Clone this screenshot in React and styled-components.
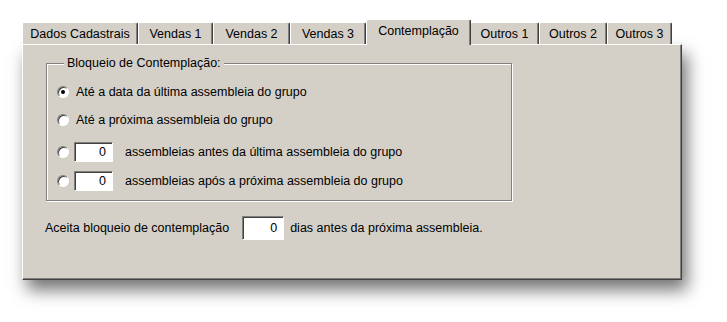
import React from "react";
import styled, { createGlobalStyle } from "styled-components";

const Global = createGlobalStyle`
  html, body { margin: 0; padding: 0; background: #ffffff; }
  body { font-family: "Liberation Sans", Arial, sans-serif; font-size: 12px; color: #000; }
`;

const Page = styled.div`
  width: 727px;
  height: 322px;
  padding: 18px 0 0 22px;
  box-sizing: border-box;
`;

const Dialog = styled.div`
  width: 660px;
  display: flex;
  flex-direction: column;
`;

const TabStrip = styled.div`
  display: flex;
  align-items: flex-end;
  height: 26px;
  position: relative;
  z-index: 1;
`;

const Tab = styled.div`
  box-sizing: border-box;
  width: ${(p) => p.$w}px;
  height: ${(p) => (p.$active ? 26 : 22)}px;
  margin: ${(p) => (p.$active ? "0 -1px -1px 0" : "0")};
  padding-bottom: ${(p) => (p.$active ? 4 : 0)}px;
  display: flex;
  align-items: center;
  justify-content: center;
  background: #d4d0c8;
  border-top: 1px solid #ffffff;
  border-left: 1px solid #ffffff;
  border-right: 1px solid #404040;
  box-shadow: inset -1px 0 0 #808080;
  border-radius: 2px 2px 0 0;
  white-space: nowrap;
  font-size: 12.5px;
  position: relative;
  z-index: ${(p) => (p.$active ? 2 : 0)};
`;

const Panel = styled.div`
  box-sizing: border-box;
  height: 236px;
  background: #d4d0c8;
  border-top: 1px solid #ffffff;
  border-left: 1px solid #ffffff;
  border-right: 1px solid #404040;
  border-bottom: 1px solid #404040;
  box-shadow: inset -1px -1px 0 #808080, 5px 10px 16px rgba(0, 0, 0, 0.55);
  padding: 11px 0 0 22px;
  display: flex;
  flex-direction: column;
`;

const Group = styled.fieldset`
  box-sizing: border-box;
  width: 466px;
  height: 145px;
  margin: 0 0 0 1px;
  padding: 0 0 0 10px;
  border: 1px solid #808080;
  box-shadow: 1px 1px 0 #ffffff, inset 1px 1px 0 #ffffff;
  display: flex;
  flex-direction: column;
`;

const Legend = styled.legend`
  padding: 0 3px;
  margin-left: 7px;
  background: #d4d0c8;
  font-size: 12.5px;
  line-height: 14px;
`;

const Row = styled.div`
  display: flex;
  align-items: center;
  height: 24px;
  margin-top: ${(p) => p.$mt}px;
  gap: ${(p) => p.$gap ?? 7}px;
  font-size: 12.5px;
`;

const Radio = styled.span`
  box-sizing: border-box;
  width: 12px;
  height: 12px;
  border-radius: 50%;
  background: #ffffff;
  border: 1px solid;
  border-color: #808080 #ffffff #ffffff #808080;
  box-shadow: inset 1px 1px 0 #404040, 0 0 0 0.5px #d4d0c8;
  display: flex;
  align-items: center;
  justify-content: center;
  flex: none;
  &::after {
    content: "";
    width: 4px;
    height: 4px;
    border-radius: 50%;
    background: ${(p) => (p.$checked ? "#000" : "transparent")};
  }
`;

const Field = styled.span`
  box-sizing: border-box;
  width: ${(p) => p.$w}px;
  height: ${(p) => p.$h}px;
  background: #ffffff;
  border: 1px solid;
  border-color: #808080 #ffffff #ffffff #808080;
  box-shadow: inset 1px 1px 0 #404040;
  display: flex;
  align-items: center;
  justify-content: flex-end;
  padding-right: 6px;
  flex: none;
  font-size: 12.5px;
`;

const BottomRow = styled.div`
  display: flex;
  align-items: center;
  margin-top: 14px;
  height: 26px;
  font-size: 12.5px;
`;

const Gap = styled.span`
  width: ${(p) => p.$w}px;
  flex: none;
`;

const tabs = [
  ["Dados Cadastrais", 116],
  ["Vendas 1", 75],
  ["Vendas 2", 77],
  ["Vendas 3", 76],
  ["Contemplação", 105, true],
  ["Outros 1", 69],
  ["Outros 2", 68],
  ["Outros 3", 65],
];

export default function App() {
  return (
    <>
      <Global />
      <Page>
        <Dialog>
          <TabStrip>
            {tabs.map(([label, w, active]) => (
              <Tab key={label} $w={w} $active={active}>
                {label}
              </Tab>
            ))}
          </TabStrip>
          <Panel>
            <Group>
              <Legend>Bloqueio de Contemplação:</Legend>
              <Row $mt={10}>
                <Radio $checked />
                <span>Até a data da última assembleia do grupo</span>
              </Row>
              <Row $mt={4}>
                <Radio />
                <span>Até a próxima assembleia do grupo</span>
              </Row>
              <Row $mt={8} $gap={5}>
                <Radio />
                <Field $w={39} $h={20}>0</Field>
                <Gap $w={2} />
                <span>assembleias antes da última assembleia do grupo</span>
              </Row>
              <Row $mt={5} $gap={5}>
                <Radio />
                <Field $w={39} $h={20}>0</Field>
                <Gap $w={2} />
                <span>assembleias após a próxima assembleia do grupo</span>
              </Row>
            </Group>
            <BottomRow>
              <span>Aceita bloqueio de contemplação</span>
              <Gap $w={13} />
              <Field $w={42} $h={24}>0</Field>
              <Gap $w={6} />
              <span>dias antes da próxima assembleia.</span>
            </BottomRow>
          </Panel>
        </Dialog>
      </Page>
    </>
  );
}
